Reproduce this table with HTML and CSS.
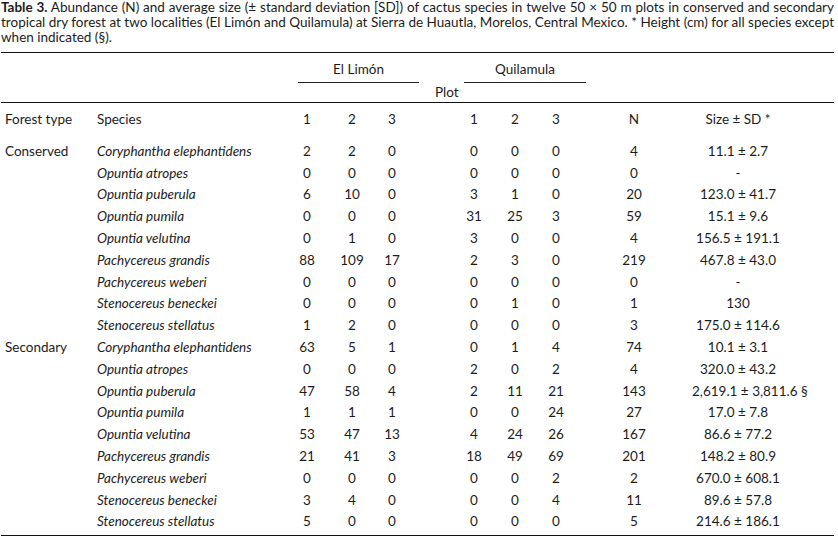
FILE: index.html
```html
<!DOCTYPE html>
<html lang="en">
<head>
<meta charset="utf-8">
<title>Table 3</title>
<link rel="stylesheet" href="styles.css">
</head>
<body>
<div class="page">
  <div class="caption">
    <p class="cap-line full"><b>Table 3.</b> Abundance (N) and average size (± standard deviation [SD]) of cactus species in twelve 50 × 50 m plots in conserved and secondary</p>
    <p class="cap-line full">tropical dry forest at two localities (El Limón and Quilamula) at Sierra de Huautla, Morelos, Central Mexico. * Height (cm) for all species except</p>
    <p class="cap-line">when indicated (§).</p>
  </div>
  <table class="data">
    <colgroup>
      <col class="c-type"><col class="c-sp"><col class="c-l1"><col class="c-l2"><col class="c-l3"><col class="c-gap"><col class="c-q1"><col class="c-q2"><col class="c-q3"><col class="c-n"><col class="c-size">
    </colgroup>
    <thead>
      <tr class="r-group">
        <th></th><th></th>
        <th colspan="3"><div class="grp grp-l">El Limón</div></th>
        <th></th>
        <th colspan="3"><div class="grp grp-q">Quilamula</div></th>
        <th></th><th></th>
      </tr>
      <tr class="r-plot">
        <th></th><th></th><th></th><th></th><th></th>
        <th class="plot">Plot</th>
        <th></th><th></th><th></th><th></th><th></th>
      </tr>
      <tr class="r-head">
        <th class="l">Forest type</th><th class="l">Species</th>
        <th>1</th><th>2</th><th>3</th><th></th>
        <th>1</th><th>2</th><th>3</th><th>N</th><th class="sz">Size ± SD *</th>
      </tr>
    </thead>
    <tbody>
      <tr><td class="l">Conserved</td><td class="l sp">Coryphantha elephantidens</td><td>2</td><td>2</td><td>0</td><td></td><td>0</td><td>0</td><td>0</td><td>4</td><td class="sz">11.1 ± 2.7</td></tr>
      <tr><td></td><td class="l sp">Opuntia atropes</td><td>0</td><td>0</td><td>0</td><td></td><td>0</td><td>0</td><td>0</td><td>0</td><td class="sz">-</td></tr>
      <tr><td></td><td class="l sp">Opuntia puberula</td><td>6</td><td>10</td><td>0</td><td></td><td>3</td><td>1</td><td>0</td><td>20</td><td class="sz">123.0 ± 41.7</td></tr>
      <tr><td></td><td class="l sp">Opuntia pumila</td><td>0</td><td>0</td><td>0</td><td></td><td>31</td><td>25</td><td>3</td><td>59</td><td class="sz">15.1 ± 9.6</td></tr>
      <tr><td></td><td class="l sp">Opuntia velutina</td><td>0</td><td>1</td><td>0</td><td></td><td>3</td><td>0</td><td>0</td><td>4</td><td class="sz">156.5 ± 191.1</td></tr>
      <tr><td></td><td class="l sp">Pachycereus grandis</td><td>88</td><td>109</td><td>17</td><td></td><td>2</td><td>3</td><td>0</td><td>219</td><td class="sz">467.8 ± 43.0</td></tr>
      <tr><td></td><td class="l sp">Pachycereus weberi</td><td>0</td><td>0</td><td>0</td><td></td><td>0</td><td>0</td><td>0</td><td>0</td><td class="sz">-</td></tr>
      <tr><td></td><td class="l sp">Stenocereus beneckei</td><td>0</td><td>0</td><td>0</td><td></td><td>0</td><td>1</td><td>0</td><td>1</td><td class="sz">130</td></tr>
      <tr><td></td><td class="l sp">Stenocereus stellatus</td><td>1</td><td>2</td><td>0</td><td></td><td>0</td><td>0</td><td>0</td><td>3</td><td class="sz">175.0 ± 114.6</td></tr>
      <tr><td class="l">Secondary</td><td class="l sp">Coryphantha elephantidens</td><td>63</td><td>5</td><td>1</td><td></td><td>0</td><td>1</td><td>4</td><td>74</td><td class="sz">10.1 ± 3.1</td></tr>
      <tr><td></td><td class="l sp">Opuntia atropes</td><td>0</td><td>0</td><td>0</td><td></td><td>2</td><td>0</td><td>2</td><td>4</td><td class="sz">320.0 ± 43.2</td></tr>
      <tr><td></td><td class="l sp">Opuntia puberula</td><td>47</td><td>58</td><td>4</td><td></td><td>2</td><td>11</td><td>21</td><td>143</td><td class="sz">2,619.1 ± 3,811.6 §</td></tr>
      <tr><td></td><td class="l sp">Opuntia pumila</td><td>1</td><td>1</td><td>1</td><td></td><td>0</td><td>0</td><td>24</td><td>27</td><td class="sz">17.0 ± 7.8</td></tr>
      <tr><td></td><td class="l sp">Opuntia velutina</td><td>53</td><td>47</td><td>13</td><td></td><td>4</td><td>24</td><td>26</td><td>167</td><td class="sz">86.6 ± 77.2</td></tr>
      <tr><td></td><td class="l sp">Pachycereus grandis</td><td>21</td><td>41</td><td>3</td><td></td><td>18</td><td>49</td><td>69</td><td>201</td><td class="sz">148.2 ± 80.9</td></tr>
      <tr><td></td><td class="l sp">Pachycereus weberi</td><td>0</td><td>0</td><td>0</td><td></td><td>0</td><td>0</td><td>2</td><td>2</td><td class="sz">670.0 ± 608.1</td></tr>
      <tr><td></td><td class="l sp">Stenocereus beneckei</td><td>3</td><td>4</td><td>0</td><td></td><td>0</td><td>0</td><td>4</td><td>11</td><td class="sz">89.6 ± 57.8</td></tr>
      <tr class="last"><td></td><td class="l sp">Stenocereus stellatus</td><td>5</td><td>0</td><td>0</td><td></td><td>0</td><td>0</td><td>0</td><td>5</td><td class="sz">214.6 ± 186.1</td></tr>
    </tbody>
  </table>
</div>
</body>
</html>
```

FILE: styles.css
```css
html, body {
  margin: 0;
  padding: 0;
  background: #ffffff;
}

body {
  font-family: "Lato", "Open Sans", "DejaVu Sans", sans-serif;
  font-size: 13.5px;
  color: #1c1c1c;
}

.page {
  width: 833px;
  padding: 0 0 0 1px;
}

.caption {
  display: flex;
  flex-direction: column;
}

.cap-line {
  margin: 0;
  height: 15px;
  line-height: 15px;
  white-space: nowrap;
}

.cap-line.full {
  text-align: justify;
  text-align-last: justify;
}

.cap-line b {
  font-weight: 700;
}

.data {
  margin-top: 6.5px;
  width: 833px;
  border-collapse: collapse;
  table-layout: fixed;
  border-top: 1.5px solid #111;
  border-bottom: 1.5px solid #111;
}

.c-type { width: 92px; }
.c-sp { width: 193px; }
.c-l1 { width: 42px; }
.c-l2 { width: 48px; }
.c-l3 { width: 32px; }
.c-gap { width: 46px; }
.c-q1 { width: 40px; }
.c-q2 { width: 42px; }
.c-q3 { width: 40px; }
.c-n { width: 116px; }
.c-size { width: 142px; }

.data th,
.data td {
  padding: 0;
  font-weight: 400;
  text-align: center;
  white-space: nowrap;
}

.data .l {
  text-align: left;
  padding-left: 4px;
}

.data .sp {
  font-style: italic;
}

.data .sz {
  padding-right: 50px;
}

.r-group th {
  height: 30px;
  vertical-align: bottom;
}

.grp {
  line-height: 16px;
  padding-bottom: 5px;
  border-bottom: 1.2px solid #222;
}

.grp-l {
  margin: 0 -11px 0 12px;
}

.grp-q {
  margin: 0 -10px 0 10px;
}

.r-plot th {
  height: 19px;
  line-height: 16px;
  vertical-align: middle;
  border-bottom: 1.5px solid #111;
}

.r-plot .plot {
  text-align: left;
  padding-left: 27px;
}

.r-head th {
  height: 38px;
  vertical-align: top;
  padding-top: 8px;
  line-height: 16px;
  box-sizing: border-box;
}

.data tbody td {
  height: 21.8px;
  line-height: 16px;
  vertical-align: middle;
}

.data tbody tr.last td {
  height: 22px;
  vertical-align: top;
  padding-top: 2px;
}
```
